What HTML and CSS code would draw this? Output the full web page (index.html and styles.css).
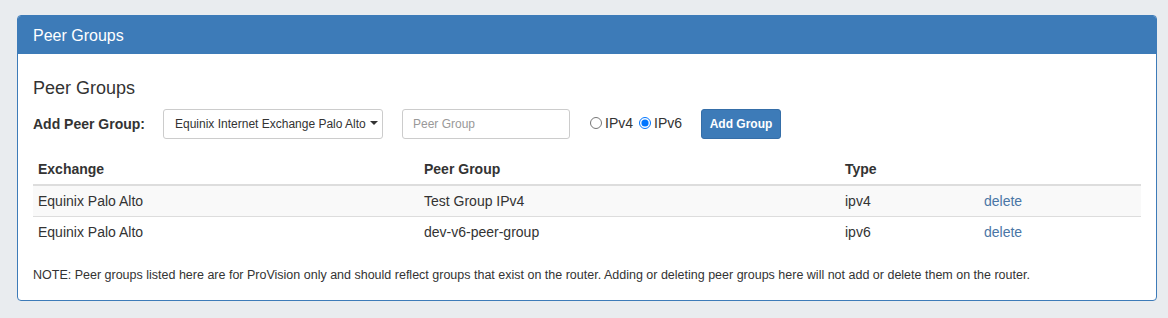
FILE: index.html
```html
<!DOCTYPE html>
<html>
<head>
<meta charset="utf-8">
<link rel="stylesheet" href="styles.css">
</head>
<body>
<div class="panel">
  <div class="panel-heading">Peer Groups</div>
  <div class="panel-body">
    <h4 class="title">Peer Groups</h4>
    <div class="form-row">
      <label class="form-label">Add Peer Group:</label>
      <div class="select">Equinix Internet Exchange Palo Alto <span class="caret"></span></div>
      <input class="text-input" type="text" placeholder="Peer Group">
      <div class="radios">
        <label class="radio"><input type="radio" name="ipv"> IPv4</label>
        <label class="radio"><input type="radio" name="ipv" checked> IPv6</label>
      </div>
      <button class="btn">Add Group</button>
    </div>
    <table class="table">
      <colgroup>
        <col class="c1"><col class="c2"><col class="c3"><col class="c4">
      </colgroup>
      <thead>
        <tr><th>Exchange</th><th>Peer Group</th><th>Type</th><th></th></tr>
      </thead>
      <tbody>
        <tr class="odd"><td>Equinix Palo Alto</td><td>Test Group IPv4</td><td>ipv4</td><td><a href="#">delete</a></td></tr>
        <tr><td>Equinix Palo Alto</td><td>dev-v6-peer-group</td><td>ipv6</td><td><a href="#">delete</a></td></tr>
      </tbody>
    </table>
    <p class="note">NOTE: Peer groups listed here are for ProVision only and should reflect groups that exist on the router. Adding or deleting peer groups here will not add or delete them on the router.</p>
  </div>
</div>
</body>
</html>
```
FILE: styles.css
```css
* { box-sizing: border-box; }
html, body { margin: 0; padding: 0; }
body {
  background: #e9ecef;
  font-family: "Liberation Sans", Arial, sans-serif;
  font-size: 14px;
  color: #333;
  padding: 15px 11px 0 17px;
}
.panel {
  background: #fff;
  border: 1px solid #3d7bb8;
  border-radius: 4px;
  width: 1140px;
}
.panel-heading {
  background: #3d7bb8;
  color: #fff;
  font-size: 16px;
  line-height: 19px;
  padding: 10px 15px 9px;
  border-radius: 3px 3px 0 0;
}
.panel-body {
  padding: 15px 15px 16px;
}
.title {
  margin: 9px 0 11px;
  font-size: 18px;
  font-weight: normal;
  line-height: 20px;
}
.form-row {
  display: flex;
  align-items: center;
  height: 30px;
}
.form-label {
  font-weight: bold;
  width: 130px;
}
.select {
  width: 220px;
  height: 30px;
  border: 1px solid #ccc;
  border-radius: 3px;
  font-size: 12px;
  color: #333;
  display: flex;
  align-items: center;
  padding: 0 0 0 11px;
}
.caret {
  display: inline-block;
  width: 0;
  height: 0;
  border-left: 4px solid transparent;
  border-right: 4px solid transparent;
  border-top: 4px solid #333;
  margin-left: 4px;
  position: relative;
  top: -1px;
}
.text-input {
  margin-left: 19px;
  width: 168px;
  height: 30px;
  border: 1px solid #ccc;
  border-radius: 3px;
  font-family: "Liberation Sans", Arial, sans-serif;
  font-size: 12px;
  padding: 0 10px;
  color: #555;
}
.text-input::placeholder { color: #999; }
.radios {
  margin-left: 18px;
  display: flex;
  gap: 4px;
  align-self: flex-start;
  padding-top: 6px;
}
.radio {
  display: flex;
  align-items: center;
  font-size: 14px;
}
.radio input {
  margin: 0 3px 0 2px;
  width: 12px;
  height: 12px;
}
.btn {
  margin-left: 19px;
  width: 80px;
  height: 30px;
  background: #3d7bb8;
  color: #fff;
  border: 1px solid #356ea8;
  border-radius: 3px;
  font-family: "Liberation Sans", Arial, sans-serif;
  font-weight: bold;
  font-size: 12px;
  padding: 0;
}
.table {
  margin-top: 15px;
  width: 1108px;
  border-collapse: collapse;
  table-layout: fixed;
}
.c1 { width: 386px; }
.c2 { width: 421px; }
.c3 { width: 139px; }
.c4 { width: 162px; }
.table th {
  text-align: left;
  font-weight: bold;
  padding: 5px 5px;
  line-height: 20px;
  border-bottom: 2px solid #ddd;
}
.table td {
  padding: 5px 5px;
  line-height: 20px;
  border-top: 1px solid #ddd;
}
.table tbody tr:first-child td { border-top: 0; }
.table tr.odd td { background: #f9f9f9; }
.table tr.odd + tr td { border-top: 1px solid #ddd; }
.table a {
  color: #4a76a6;
  text-decoration: none;
}
.note {
  margin: 20px 0 0;
  font-size: 12.5px;
  line-height: 17px;
}
```
